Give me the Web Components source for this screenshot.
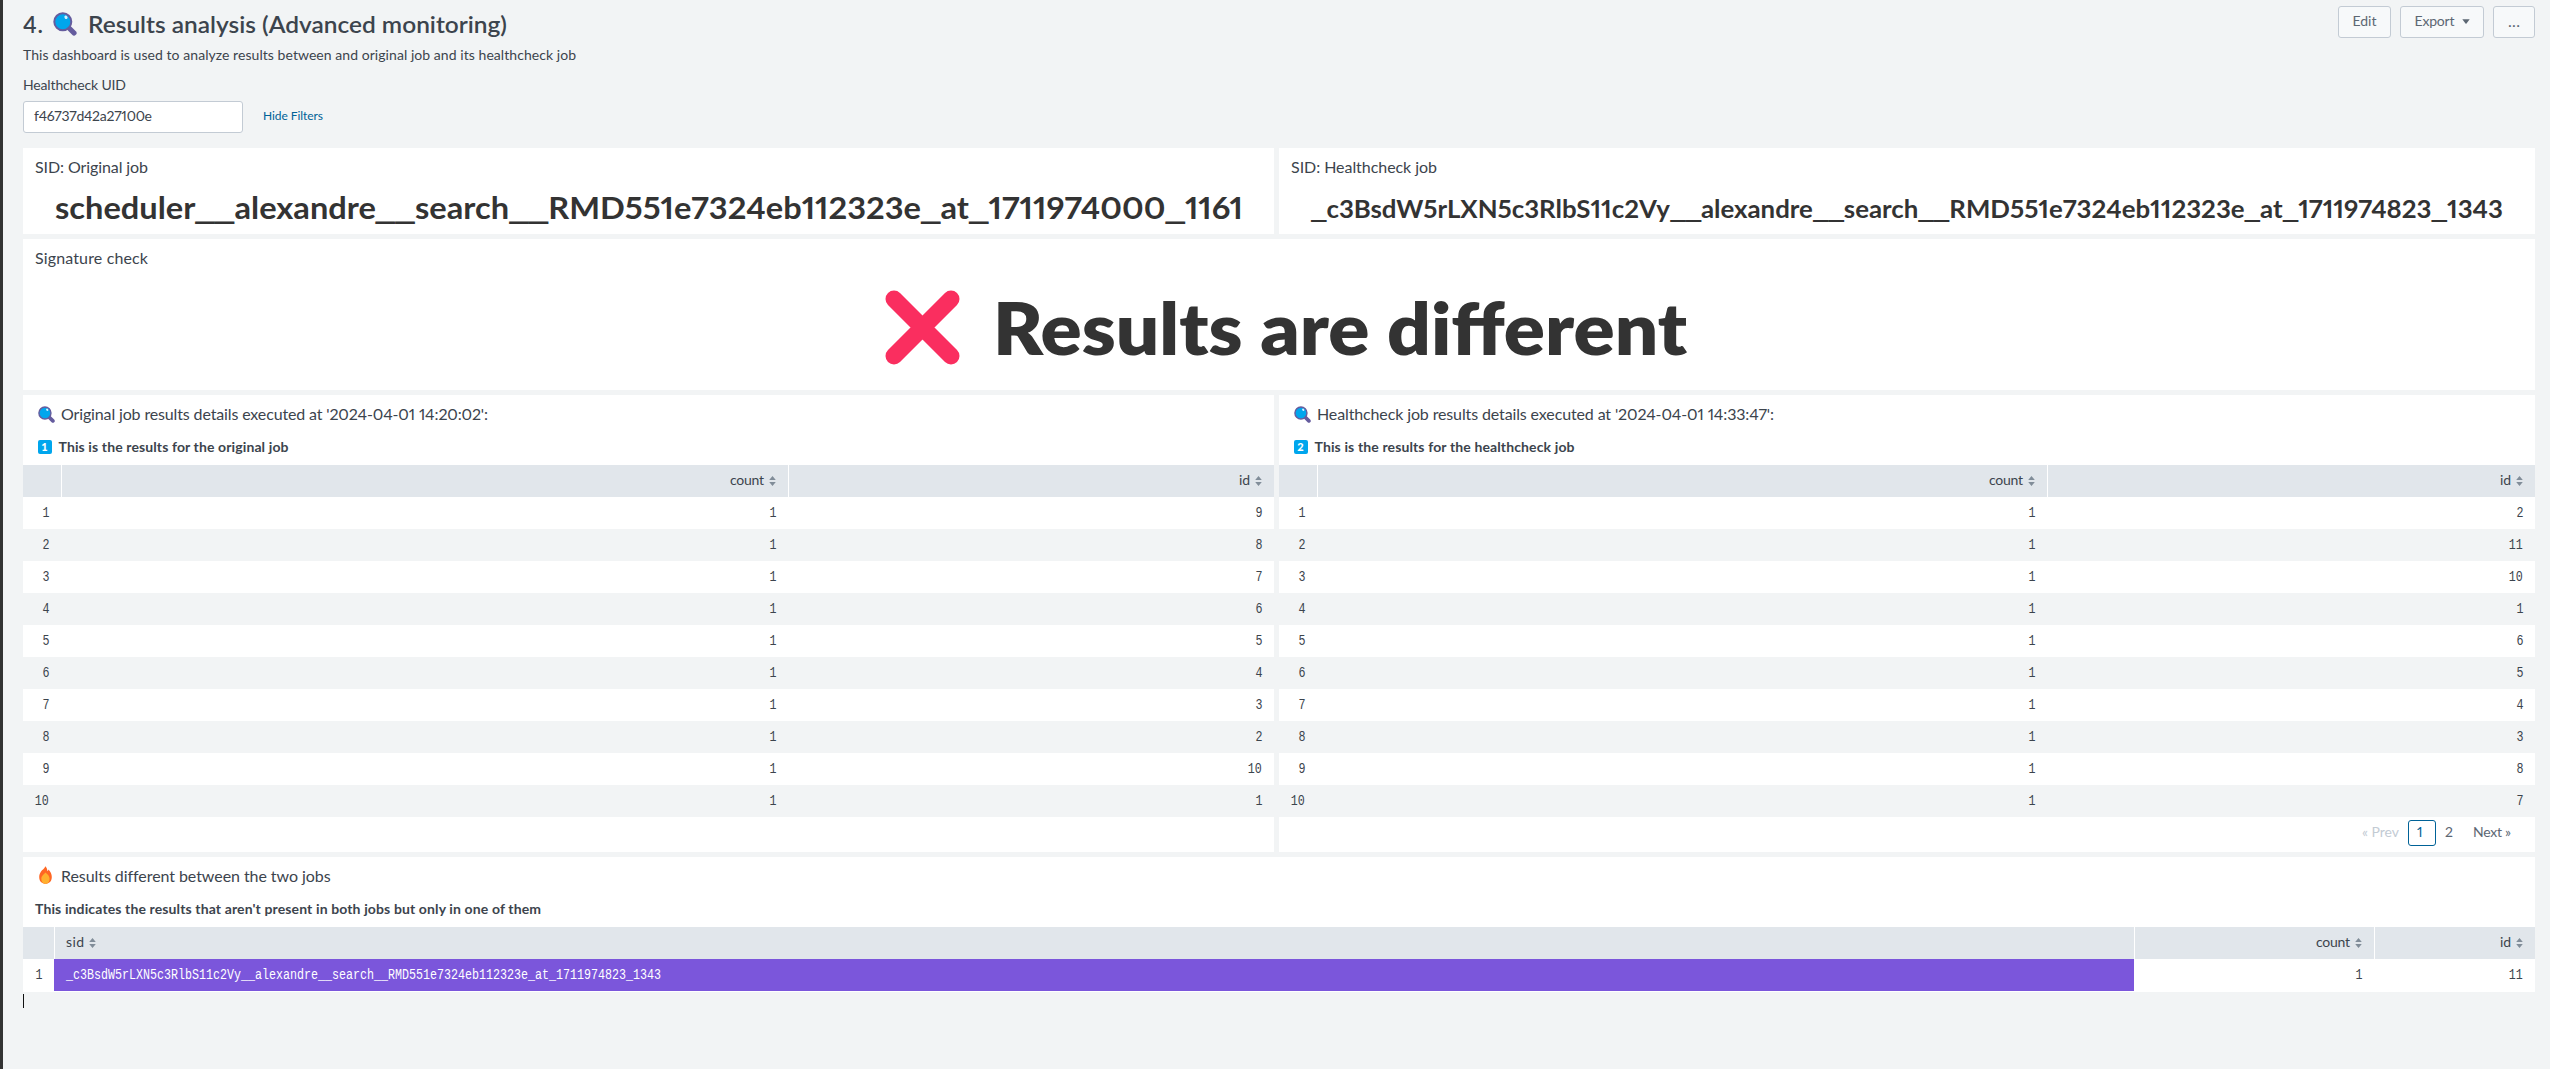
<!DOCTYPE html>
<html lang="en">
<head>
<meta charset="utf-8">
<title>Results analysis</title>
<style>
html,body{margin:0;height:100%}
body{background:#f2f4f5;font-family:Lato,"Open Sans",sans-serif;color:#3c444d;overflow:hidden;font-variant-numeric:proportional-nums}
</style>
</head>
<body>
<dash-page></dash-page>
<script>
const define = (name, html, setup) => customElements.define(name, class extends HTMLElement {
  connectedCallback() {
    if (this.shadowRoot) return;
    const root = this.attachShadow({mode: 'open'});
    root.innerHTML = typeof html === 'function' ? html(this) : html;
    if (setup) setup(this, root);
  }
});

/* text run tracked to a given width */
define('fit-text', `<style>
:host{display:inline-block;white-space:pre;flex:none}
span{display:inline-block;white-space:pre}
</style><span><slot></slot></span>`, (el, root) => {
  const span = root.querySelector('span');
  const target = +el.getAttribute('w');
  const natural = span.getBoundingClientRect().width;
  const n = el.textContent.length;
  if (target && n > 1) span.style.letterSpacing = ((target - natural) / (n - 1)).toFixed(4) + 'px';
  if (target) el.style.width = target + 'px';
});

/* headline stretched to a given width, with wide underscores */
define('wide-text', el => {
  const marked = el.textContent.replace(/_/g, '<i>_</i>');
  el.textContent = '';
  return `<style>
:host{display:inline-block;white-space:pre;flex:none}
span{display:inline-block;white-space:pre;transform-origin:left center}
i{display:inline-block;font-style:normal;text-align:center;transform-origin:center}
</style><span>${marked}</span>`;
}, (el, root) => {
  const span = root.querySelector('span');
  const size = parseFloat(getComputedStyle(el).fontSize);
  const marks = [...root.querySelectorAll('i')];
  if (marks.length) {
    const w = marks[0].getBoundingClientRect().width, goal = size * .6;
    for (const m of marks) { m.style.width = goal + 'px'; m.style.transform = `scaleX(${goal / w * 1.2})`; }
  }
  const target = +el.getAttribute('w');
  span.style.transform = `scaleX(${target / span.getBoundingClientRect().width})`;
  el.style.width = target + 'px';
});

const svgs = {
  lens: `<svg viewBox="0 0 24 24"><path d="M15.5 15.5L21 21" stroke="#655c9e" stroke-width="5.2" stroke-linecap="round"/><circle cx="9.8" cy="9.8" r="8.5" fill="#00a6ed" stroke="#655c9e" stroke-width="2"/><ellipse cx="13" cy="5.3" rx="1.5" ry="1.8" fill="#d3f1ff" transform="rotate(-35 13 5.3)"/></svg>`,
  fire: `<svg viewBox="0 0 13 18"><path d="M6.3 .2C7.5 1.3 8.3 3 8.5 5.200C9 4.700 9.300 4.200 9.500 3.500C11.600 5.600 12.800 8.300 12.800 11C12.800 15.500 10 17.800 6.500 17.800S.2 15.500 .2 11C.2 8.500 1.300 6.200 3 4.300C4.500 3.200 5.700 1.800 6.300 .2Z" fill="#ff6723"/><path d="M6.500 6.500C8 8 10.600 9.500 10.600 12.800C10.600 15.800 9 17.800 6.500 17.800S2.300 15.800 2.300 12.800C2.300 9.800 5 8.300 6.500 6.500Z" fill="#ffb02e"/></svg>`,
  cross: `<svg viewBox="0 0 75 75"><path d="M9 9L66 66M66 9L9 66" stroke="#fa2e5f" stroke-width="17" stroke-linecap="round"/></svg>`,
  caret: `<svg viewBox="0 0 8 5"><path d="M.3 .2H7.700L4.500 4.500Q4 5 3.500 4.500Z" fill="#5c6773"/></svg>`,
  sort: `<svg viewBox="0 0 7 10"><path d="M3.500 0L6.800 4H.2ZM3.500 10L.2 6H6.800Z" fill="#818d99"/></svg>`
};
define('ui-icon', el => `<style>:host{display:block;flex:none}svg{display:block;width:100%;height:100%}</style>` + svgs[el.getAttribute('name')].replace('<svg ', '<svg fill="none" '));

define('num-badge', `<style>:host{display:flex;align-items:center;justify-content:center;flex:none;width:14px;height:14px;border-radius:2px;background:#00a6ed;color:#fff;font:900 11px/14px Lato,sans-serif}</style><slot></slot>`);

define('ui-button', `<style>:host{display:flex;box-sizing:border-box;align-items:center;justify-content:center;gap:7px;height:32px;padding-bottom:2px;border:1px solid #c3cbd4;border-radius:3px;background:#f7f9fa;color:#5c6773;font-size:14px;line-height:20px;flex:none}</style><slot></slot>`);

define('dash-panel', `<style>
:host{display:flex;flex-direction:column;background:#fff;box-sizing:border-box;min-width:0}
.title{height:38px;display:flex;align-items:center;padding-left:12px;font-size:16px;line-height:38px;flex:none}
</style><div class="title"><slot name="title"></slot></div><slot></slot>`);

define('single-value', `<style>:host{display:flex;flex:1;align-items:center;justify-content:center;box-sizing:border-box;color:#333;font-weight:700;line-height:1.2}</style><slot></slot>`);

define('panel-note', `<style>:host{display:flex;align-items:center;box-sizing:border-box;height:32px;padding:0 0 5px 12px;font-size:14px;font-weight:700;line-height:27px;flex:none}</style><slot></slot>`);

define('head-cell', el => `<style>
:host{display:flex;align-items:center;justify-content:${el.hasAttribute('left') ? 'flex-start' : 'flex-end'};gap:5px;box-sizing:border-box;height:32px;border-left:1px solid #fff;padding:0 12px 0 11px;background:#e1e6eb;font-size:14px}
:host(:first-of-type){border:0}
div{line-height:20px;padding-bottom:2px}
ui-icon{width:7px;height:10px}
</style><div><slot></slot></div>${el.textContent ? '<ui-icon name="sort"></ui-icon>' : ''}`);

define('body-cell', `<style>
:host{display:flex;align-items:center;justify-content:flex-end;box-sizing:border-box;height:32px;padding:0 12px 1px;font:14px/20px "Liberation Mono",monospace}
span{display:inline-block;transform:scaleX(.8333);transform-origin:right center;white-space:pre}
:host([fill]){background:#7b56db;color:#fff;justify-content:flex-start}
:host([fill]) span{transform-origin:left center}
</style><span><slot></slot></span>`);

define('data-table', el => {
  const heads = el.getAttribute('heads').split('|');
  const widths = {count: 34, id: 11, sid: 18};
  const rows = JSON.parse(el.getAttribute('rows'));
  const hl = heads.indexOf('sid');
  return `<style>
:host{display:block}
.row{display:grid;grid-template-columns:${el.getAttribute('cols')}}
.row.even{background:#f2f4f5}
</style><div class="row">${heads.map(h => `<head-cell${h === 'sid' ? ' left' : ''}>${h ? `<fit-text w="${widths[h]}">${h}</fit-text>` : ''}</head-cell>`).join('')}</div>` +
  rows.map((r, i) => `<div class="row ${i % 2 ? 'even' : ''}">${[i + 1, ...r].map((c, k) => `<body-cell${k === hl ? ' fill' : ''}>${c}</body-cell>`).join('')}</div>`).join('');
});

define('page-nav', `<style>
:host{display:flex;justify-content:flex-end;align-items:flex-start;padding:3px 24px 0 0;font-size:14px;line-height:20px;color:#5c6773}
div{height:26px;box-sizing:border-box;line-height:24px;padding-bottom:2px}
.off{color:#c3cbd4;margin-right:9px}
.on{width:28px;border:1px solid #006297;border-radius:3px;padding-left:8px;line-height:21px;color:#006297;margin-right:9px}
.two{margin-right:20px}
</style><div class="off"><fit-text w="37">« Prev</fit-text></div><div class="on">1</div><div class="two">2</div><div><fit-text w="38">Next »</fit-text></div>`);

define('text-input', `<style>:host{display:flex;align-items:center;box-sizing:border-box;width:220px;height:32px;padding:0 10px 3px;border:1px solid #c3cbd4;border-radius:3px;background:#fff;font-size:14px;line-height:20px}</style><slot></slot>`);

define('dash-page', `<style>
:host{display:block;box-sizing:border-box;height:1069px;border-left:3px solid #333;padding:0 15px 0 20px}
header{display:flex;justify-content:space-between;height:148px;box-sizing:border-box}
.left{padding-top:8px}
h1{margin:0;display:flex;align-items:center;height:32px;font-size:23px;line-height:32px;font-weight:600}
h1 ui-icon{width:24px;height:24px;margin:0 11px 0 10px}
.desc{height:29px;font-size:14px;line-height:29px}
.label{height:32px;font-size:14px;line-height:31px}
.form{display:flex;gap:20px;align-items:center}
.link{color:#006297;font-size:12px;line-height:16px;padding-bottom:3px}
.btns{display:flex;gap:9px;padding-top:6px}
.row{display:grid;grid-template-columns:1251px 1256px;gap:5px;margin-bottom:5px}
.tl{width:17px;height:17px;margin:0 6px 0 3px}
.tf{width:13px;height:18px;margin:0 9px 3px 4px}
num-badge{margin:1px 7px 0 2.500px}
.cursor{width:1px;height:14px;background:#111;margin-top:2px}
</style>
<header>
  <div class="left">
    <h1><fit-text w="20">4.</fit-text><ui-icon name="lens"></ui-icon><wide-text w="419">Results analysis (Advanced monitoring)</wide-text></h1>
    <div class="desc"><fit-text w="553">This dashboard is used to analyze results between and original job and its healthcheck job</fit-text></div>
    <div class="label"><fit-text w="103">Healthcheck UID</fit-text></div>
    <div class="form"><text-input><fit-text w="118">f46737d42a27100e</fit-text></text-input><div class="link"><fit-text w="60">Hide Filters</fit-text></div></div>
  </div>
  <div class="btns">
    <ui-button style="width:53px"><fit-text w="24">Edit</fit-text></ui-button>
    <ui-button style="width:84px"><fit-text w="40">Export</fit-text><ui-icon name="caret" style="width:8px;height:5px"></ui-icon></ui-button>
    <ui-button style="width:42px"><fit-text w="12" style="font-size:16px">...</fit-text></ui-button>
  </div>
</header>
<div class="row" style="height:86px">
  <dash-panel><fit-text slot="title" w="113">SID: Original job</fit-text>
    <single-value style="font-size:30px;padding-bottom:7px"><wide-text w="1188">scheduler__alexandre__search__RMD551e7324eb112323e_at_1711974000_1161</wide-text></single-value></dash-panel>
  <dash-panel><fit-text slot="title" w="146">SID: Healthcheck job</fit-text>
    <single-value style="font-size:25px;padding-bottom:4px"><wide-text w="1192">_c3BsdW5rLXN5c3RlbS11c2Vy__alexandre__search__RMD551e7324eb112323e_at_1711974823_1343</wide-text></single-value></dash-panel>
</div>
<dash-panel style="height:151px;margin-bottom:5px"><fit-text slot="title" w="113">Signature check</fit-text>
  <single-value style="font-size:71px;font-weight:800;padding:0 0 12px 13px;gap:33px"><ui-icon name="cross" style="width:75px;height:75px"></ui-icon><wide-text w="694">Results are different</wide-text></single-value></dash-panel>
<div class="row" style="height:457px">
  <dash-panel><ui-icon slot="title" class="tl" name="lens"></ui-icon><fit-text slot="title" w="427">Original job results details executed at '2024-04-01 14:20:02':</fit-text>
    <panel-note><num-badge>1</num-badge><fit-text w="230">This is the results for the original job</fit-text></panel-note>
    <data-table cols="38px 727px 1fr" heads="|count|id" rows="[[1,9],[1,8],[1,7],[1,6],[1,5],[1,4],[1,3],[1,2],[1,10],[1,1]]"></data-table></dash-panel>
  <dash-panel><ui-icon slot="title" class="tl" name="lens"></ui-icon><fit-text slot="title" w="457">Healthcheck job results details executed at '2024-04-01 14:33:47':</fit-text>
    <panel-note><num-badge>2</num-badge><fit-text w="260">This is the results for the healthcheck job</fit-text></panel-note>
    <data-table cols="38px 730px 1fr" heads="|count|id" rows="[[1,2],[1,11],[1,10],[1,1],[1,6],[1,5],[1,4],[1,3],[1,8],[1,7]]"></data-table>
    <page-nav></page-nav></dash-panel>
</div>
<dash-panel style="height:135px"><ui-icon slot="title" class="tf" name="fire"></ui-icon><fit-text slot="title" w="269">Results different between the two jobs</fit-text>
  <panel-note><fit-text w="506">This indicates the results that aren't present in both jobs but only in one of them</fit-text></panel-note>
  <data-table cols="31px 2080px 240px 1fr" heads="|sid|count|id" rows='[["_c3BsdW5rLXN5c3RlbS11c2Vy__alexandre__search__RMD551e7324eb112323e_at_1711974823_1343",1,11]]'></data-table></dash-panel>
<div class="cursor"></div>`);
</script>
</body>
</html>
